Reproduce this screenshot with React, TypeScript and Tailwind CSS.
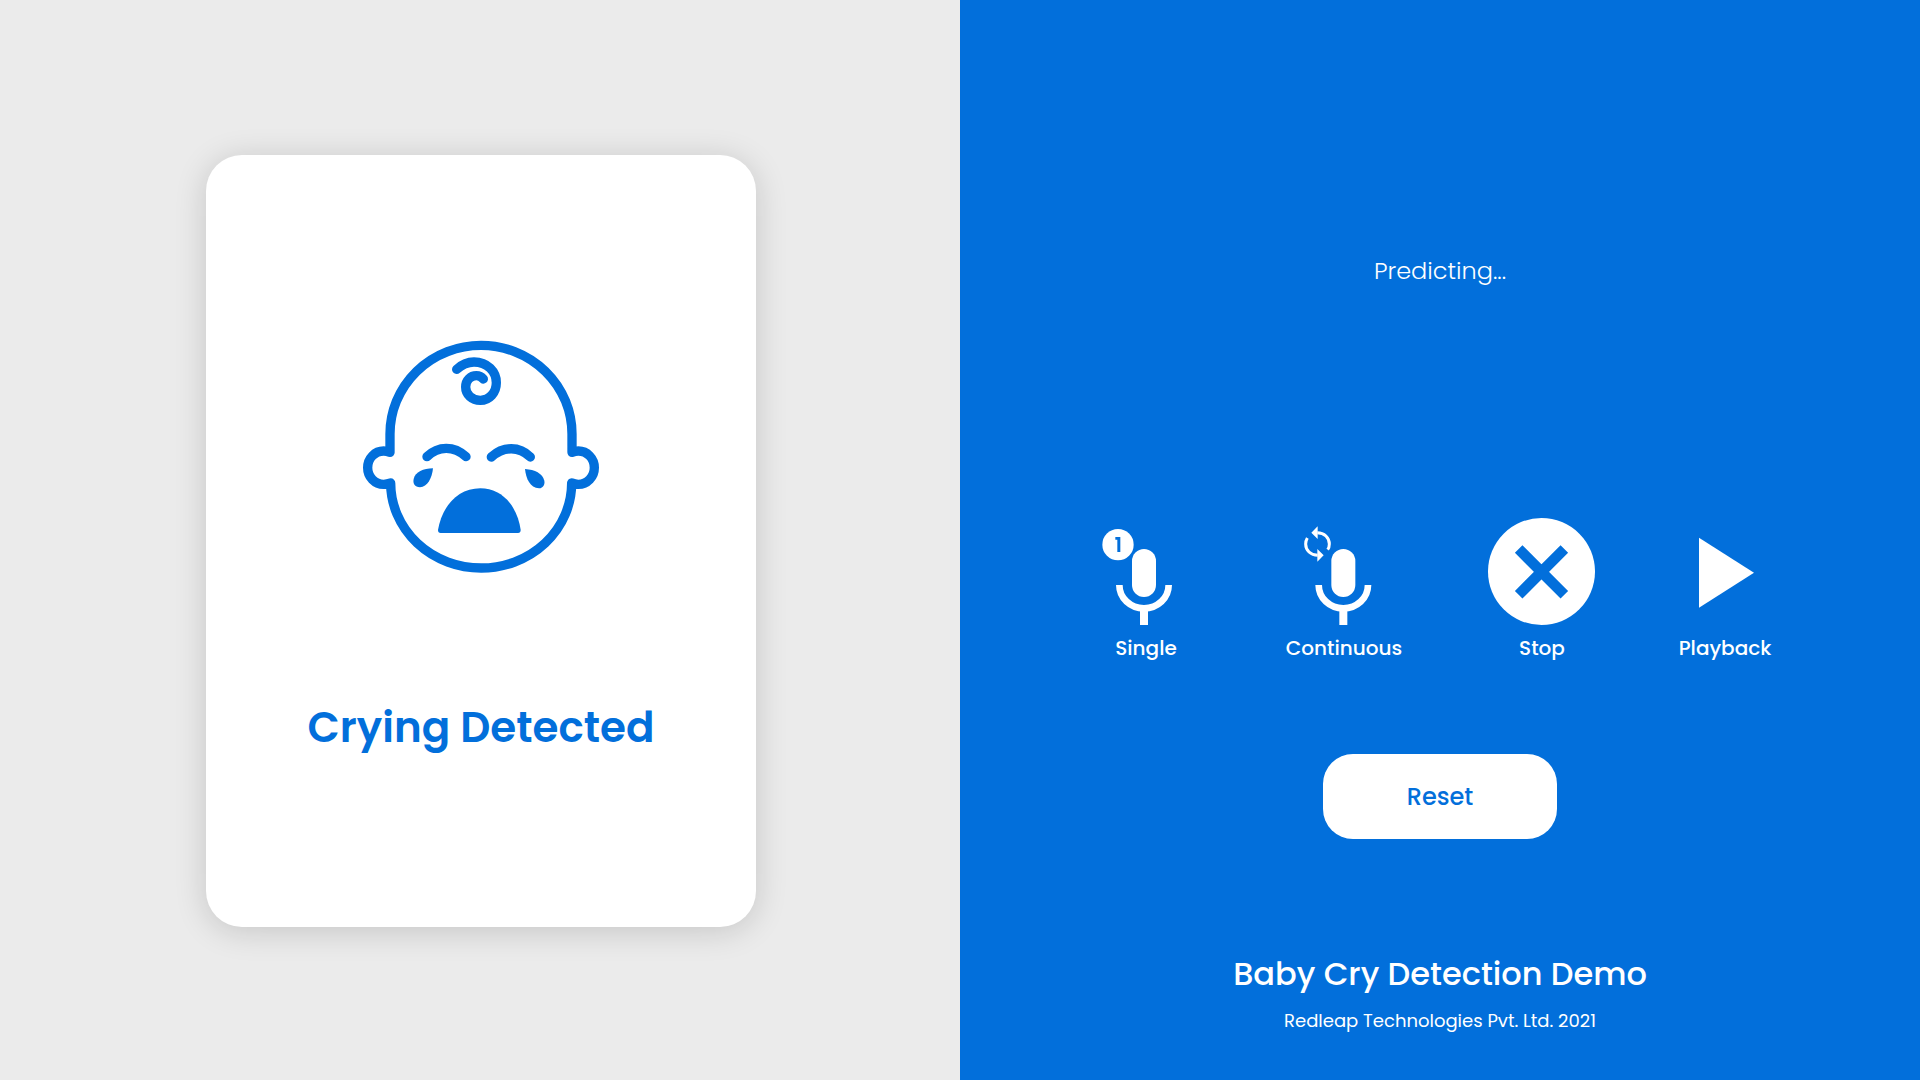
import type { ReactNode } from "react";

function CryingBaby() {
  return (
    <svg
      viewBox="36 30 714 702"
      className="h-[234px] w-[238px]"
      fill="none"
      stroke="currentColor"
      strokeWidth="28"
      strokeLinecap="round"
      strokeLinejoin="round"
      aria-hidden="true"
    >
      <path d="M120 367V312A273 266 0 0 1 666 312V367Q676 363 685 363A48 50 0 0 1 685 463Q676 463 665 459A271.5 255 0 0 1 122 459Q110 463 101 463A48 50 0 0 1 101 363Q110 363 120 367" />
      <path d="M320 118C335 104 350 96 372 96C412 96 439 125 439 158C439 188 418 211 391 211C366 211 347 194 347 171C347 150 362 137 379 137C388 137 395 141 400 147" />
      <path d="M231 380C265 347 312 347 348 380M424 381C460 348 508 348 541 381" />
      <g fill="currentColor" stroke="none">
        <path d="M249 415C246 445 232 471 210 472C194 471 188 461 191 447C196 425 220 416 249 415Z" />
        <path d="M525 417C528 445 540 474 567 475C580 474 585 463 583 452C577 430 555 419 525 417Z" />
        <path d="M264 600C276 527 325 475 391 475C455 475 502 527 512 600Q512 609 504 609H272Q264 609 264 600Z" />
      </g>
    </svg>
  );
}

function MicShape() {
  return (
    <>
      <rect x="156" y="147" width="72" height="144" rx="36" fill="currentColor" />
      <path d="M118 255C118 294 151 325 192 325S266 294 266 255" fill="none" stroke="currentColor" strokeWidth="20" />
      <path d="M180 328H204V375H180Z" fill="currentColor" />
    </>
  );
}

function SingleIcon() {
  return (
    <svg viewBox="9 54 378 321" className="h-[107px] w-[126px]" aria-hidden="true">
      <circle cx="114" cy="134" r="47" fill="currentColor" />
      <path d="M106 111H121V156H112V119H106Z" className="fill-[#026fdb]" />
      <MicShape />
    </svg>
  );
}

function ContinuousIcon() {
  return (
    <svg viewBox="5 54 378 321" className="h-[107px] w-[126px]" aria-hidden="true">
      <g transform="translate(-598 0)" fill="none" stroke="currentColor" strokeWidth="9">
        <path d="M712 98C733 98 748 113 748 132C748 139 746 145 743 149" />
        <path d="M713 166C692 166 677 151 677 132C677 125 679 119 682 114" />
        <path d="M694 98L713 79V117ZM731 166L712 185V147Z" fill="currentColor" stroke="none" />
      </g>
      <MicShape />
    </svg>
  );
}

function StopIcon() {
  return (
    <svg viewBox="0 0 324 321" className="h-[107px] w-[108px]" aria-hidden="true">
      <circle cx="160.5" cy="160.5" r="160.5" fill="currentColor" />
      <path d="M92 93L229 230M229 93L92 230" className="stroke-[#026fdb]" strokeWidth="32" />
    </svg>
  );
}

function PlayIcon() {
  return (
    <svg viewBox="651 54 288 321" className="h-[107px] w-[96px]" aria-hidden="true">
      <path d="M717 113L882 218L717 323Z" fill="currentColor" />
    </svg>
  );
}

function Control({ label, width, children }: { label: string; width: string; children: ReactNode }) {
  return (
    <button type="button" className={`flex cursor-pointer flex-col items-center gap-[7px] ${width}`}>
      {children}
      <span className="text-xl leading-8 font-medium">{label}</span>
    </button>
  );
}

export default function App() {
  return (
    <div className="grid min-h-screen grid-cols-2 font-[Poppins,Inter,sans-serif]">
      <main className="flex items-center justify-center bg-[#ebebeb] pt-0.5 pl-0.5">
        <section className="flex min-h-[71.5vh] w-[57.5%] flex-col items-center justify-center gap-[122px] rounded-[36px] bg-white pt-[18px] text-[#026fdb] shadow-[0_4px_32px_rgba(0,0,0,0.16)]">
          <CryingBaby />
          <h1 className="text-[42px] leading-16 font-semibold whitespace-nowrap">Crying Detected</h1>
        </section>
      </main>

      <aside className="flex flex-col items-center bg-[#026fdb] pt-[255px] pb-[43px] text-white">
        <p className="text-2xl leading-8 font-light">Predicting...</p>
        <div className="flex-[2]" />
        <div className="flex justify-center gap-18 pr-6">
          <Control label="Single" width="w-[126px]">
            <SingleIcon />
          </Control>
          <Control label="Continuous" width="w-[126px]">
            <ContinuousIcon />
          </Control>
          <Control label="Stop" width="w-[126px]">
            <StopIcon />
          </Control>
          <Control label="Playback" width="w-[96px]">
            <PlayIcon />
          </Control>
        </div>
        <button
          type="button"
          className="mt-[90px] cursor-pointer rounded-[30px] bg-white px-[84px] pt-[27px] pb-[26px] text-2xl leading-8 font-medium text-[#026fdb]"
        >
          Reset
        </button>
        <div className="flex-1" />
        <footer className="flex flex-col items-center gap-[11px]">
          <h2 className="text-[32px] leading-10 font-medium">Baby Cry Detection Demo</h2>
          <p className="text-lg leading-8">Redleap Technologies Pvt. Ltd. 2021</p>
        </footer>
      </aside>
    </div>
  );
}
